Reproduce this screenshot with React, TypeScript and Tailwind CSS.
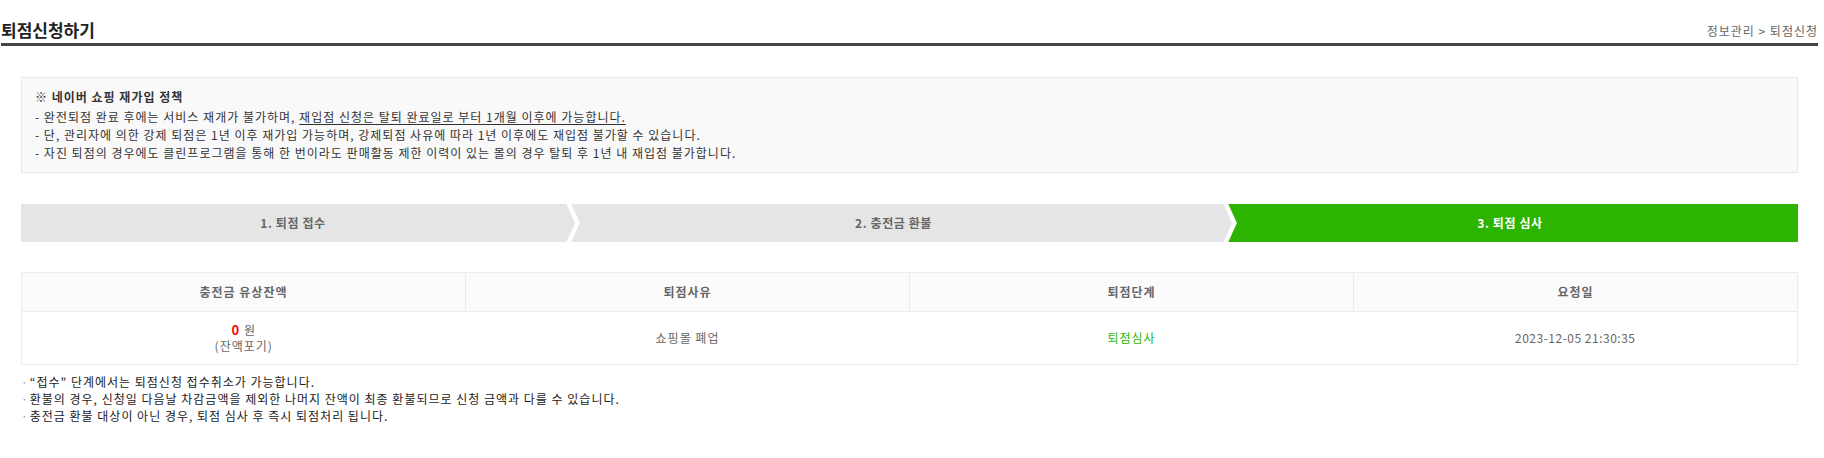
const steps = [
  { label: '1. 퇴점 접수', width: 'w-[544px]', active: false },
  { label: '2. 충전금 환불', width: 'w-[657px]', active: false },
  { label: '3. 퇴점 심사', width: 'flex-1', active: true },
];

const notes = [
  '“접수” 단계에서는 퇴점신청 접수취소가 가능합니다.',
  '환불의 경우, 신청일 다음날 차감금액을 제외한 나머지 잔액이 최종 환불되므로 신청 금액과 다를 수 있습니다.',
  '충전금 환불 대상이 아닌 경우, 퇴점 심사 후 즉시 퇴점처리 됩니다.',
];

// chevron drawn over the start of a step: left part keeps the previous step's colour
const Chevron = ({ prev }: { prev: string }) => (
  <svg
    className="absolute top-0 left-[-2px] h-[38px] w-[20px]"
    viewBox="0 0 20 38"
    aria-hidden="true"
  >
    <polygon points="0,0 4.5,0 14.5,19 4.5,38 0,38" fill={prev} />
    <polyline
      points="4.5,-3 14.5,19 4.5,41"
      fill="none"
      stroke="#ffffff"
      strokeWidth="4.4"
      strokeLinejoin="miter"
    />
  </svg>
);

export default function App() {
  return (
    <div className="min-h-[458px] w-[1824px] bg-white font-['Noto_Sans_CJK_KR','Noto_Sans',sans-serif]">
      <div className="ml-px w-[1817px]">
        {/* 제목 */}
        <div className="flex h-[46px] items-end justify-between border-b-[3px] border-[#444]">
          <h2 className="pb-px text-[17px] font-bold leading-[24px] text-[#222]">퇴점신청하기</h2>
          <div className="pb-[4px] text-[12px] leading-[16px] tracking-[1px] text-[#666]">정보관리 &gt; 퇴점신청</div>
        </div>

        <div className="mx-[20px]">
          {/* 재가입 정책 */}
          <div className="mt-[31px] border border-[#e8e8e8] bg-[#f9f9f9] px-[13px] pt-[10px] pb-[10px] text-[12px] leading-[18px] tracking-[1px] text-[#333]">
            <p className="mb-[2px] font-bold text-[#333]">※ 네이버 쇼핑 재가입 정책</p>
            <p>
              - 완전퇴점 완료 후에는 서비스 재개가 불가하며,{' '}
              <span className="underline underline-offset-2">재입점 신청은 탈퇴 완료일로 부터 1개월 이후에 가능합니다.</span>
            </p>
            <p>- 단, 관리자에 의한 강제 퇴점은 1년 이후 재가입 가능하며, 강제퇴점 사유에 따라 1년 이후에도 재입점 불가할 수 있습니다.</p>
            <p>- 자진 퇴점의 경우에도 클린프로그램을 통해 한 번이라도 판매활동 제한 이력이 있는 몰의 경우 탈퇴 후 1년 내 재입점 불가합니다.</p>
          </div>

          {/* 진행 단계 */}
          <div className="mt-[31px] flex h-[38px] text-[12px] font-bold leading-[38px] tracking-[0.6px]">
            {steps.map((step, i) => (
              <div
                key={step.label}
                className={
                  'relative text-center ' +
                  step.width +
                  (step.active ? ' bg-[#2db400] text-white' : ' bg-[#e5e5e5] text-[#666]')
                }
              >
                {i > 0 && <Chevron prev="#e5e5e5" />}
                <span className="relative">{step.label}</span>
              </div>
            ))}
          </div>

          {/* 퇴점 현황 */}
          <table className="mt-[30px] w-full table-fixed border-collapse border border-[#ebebeb] text-[12px] tracking-[1px]">
            <thead>
              <tr className="bg-[#fbfbfb] text-[#666]">
                <th className="h-[39px] border border-[#ebebeb] font-bold">충전금 유상잔액</th>
                <th className="h-[39px] border border-[#ebebeb] font-bold">퇴점사유</th>
                <th className="h-[39px] border border-[#ebebeb] font-bold">퇴점단계</th>
                <th className="h-[39px] border border-[#ebebeb] font-bold">요청일</th>
              </tr>
            </thead>
            <tbody>
              <tr className="text-center text-[#666]">
                <td className="h-[53px] border-b border-[#ebebeb] leading-[16px]">
                  <div>
                    <span className="text-[13px] font-bold text-[#ff0000]">0</span> 원
                  </div>
                  <div>(잔액포기)</div>
                </td>
                <td className="border-b border-[#ebebeb]">쇼핑몰 폐업</td>
                <td className="border-b border-[#ebebeb] text-[#2db400]">퇴점심사</td>
                <td className="border-b border-[#ebebeb] tracking-[0.5px]">2023-12-05 21:30:35</td>
              </tr>
            </tbody>
          </table>

          {/* 안내 */}
          <ul className="mt-[8px] text-[12px] leading-[17px] tracking-[1px] text-[#222]">
            {notes.map((note) => (
              <li key={note}>
                <span className="mr-px text-[#999]">·</span>
                {note}
              </li>
            ))}
          </ul>
        </div>
      </div>
    </div>
  );
}
